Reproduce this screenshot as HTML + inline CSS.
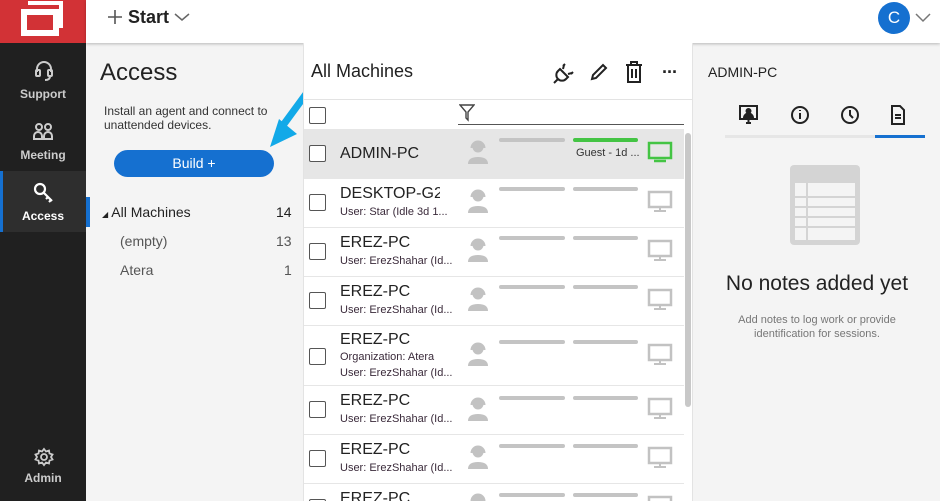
<!DOCTYPE html>
<html style="overflow:hidden;height:501px"><head><meta charset="utf-8"><style>
*{margin:0;padding:0;box-sizing:border-box}
body{width:940px;height:501px;overflow:hidden;font-family:"Liberation Sans",Arial,sans-serif;background:#f4f4f4;position:relative;color:#222}
.a{position:absolute}
.side{left:0;top:0;width:86px;height:501px;background:#202020}
.logo{left:0;top:0;width:86px;height:43px;background:#d23236}
.nav{width:86px;text-align:center;color:#ccc;font-size:12px;font-weight:bold}
.hdr{left:86px;top:0;width:854px;height:43px;background:#fff;box-shadow:0 1px 3px rgba(0,0,0,.25)}
.mid{left:303px;top:43px;width:390px;height:458px;background:#fff;border-left:1px solid #e3e3e3;border-right:1px solid #e3e3e3}
.row{left:304px;width:380px;border-bottom:1px solid #e6e6e6;overflow:hidden}
.cb{position:absolute;left:5px;width:17px;height:17px;border:1.5px solid #555;border-radius:2px;background:#fff}
.nm{position:absolute;left:36px;font-size:16px;color:#222;width:100px;overflow:hidden;white-space:nowrap}
.sb{position:absolute;left:36px;font-size:11px;color:#3a2a3a;white-space:nowrap}
</style></head><body>
<div class="a side"></div>
<div class="a logo"><svg width="86" height="43"><rect x="24" y="12" width="32" height="21" fill="none" stroke="#fff" stroke-width="6"/><path d="M28 3H61V28" fill="none" stroke="#fff" stroke-width="4"/></svg></div>
<svg class="a" style="left:33px;top:60px" width="22" height="22" fill="none" stroke="#ccc" stroke-width="2"><path d="M4 12V9a7 7 0 0 1 14 0v3"/><rect x="3" y="10" width="4" height="6" rx="1"/><rect x="15" y="10" width="4" height="6" rx="1"/><path d="M17 16q0 4-5 4"/></svg>
<div class="a nav" style="top:87px">Support</div>
<svg class="a" style="left:32px;top:122px" width="24" height="20" fill="none" stroke="#ccc" stroke-width="2"><circle cx="7" cy="5" r="3"/><circle cx="16" cy="5" r="3"/><path d="M2 17v-3a4 4 0 0 1 8 0v3zM12 17v-3a4 4 0 0 1 8 0v3z"/></svg>
<div class="a nav" style="top:148px">Meeting</div>
<div class="a" style="left:0;top:171px;width:86px;height:61px;background:#2e2e2e;border-left:3px solid #1570d0"></div>
<svg class="a" style="left:33px;top:182px" width="22" height="22" fill="none" stroke="#fff" stroke-width="2.2"><circle cx="7" cy="7" r="5"/><path d="M11 11l8 8M15 15l-2 2M18 18l-2 2"/></svg>
<div class="a nav" style="top:209px;color:#fff">Access</div>
<svg class="a" style="left:34px;top:447px" width="20" height="20" fill="none" stroke="#ccc" stroke-width="1.8"><circle cx="10" cy="10" r="3"/><path d="M10 2l2 2.5 3-1 .5 3 3 1-1.5 2.5 1.5 2.5-3 1-.5 3-3-1-2 2.5-2-2.5-3 1-.5-3-3-1L3 10 1.5 7.5l3-1 .5-3 3 1z"/></svg>
<div class="a nav" style="top:471px">Admin</div>

<div class="a hdr"></div>
<svg class="a" style="left:107px;top:9px" width="16" height="16" stroke="#555" stroke-width="1.6"><path d="M8 1v14M1 8h14"/></svg>
<div class="a" style="left:128px;top:7px;font-size:18px;font-weight:bold;color:#222">Start</div>
<svg class="a" style="left:174px;top:12px" width="16" height="10" fill="none" stroke="#666" stroke-width="1.5"><path d="M1 2l7 6 7-6"/></svg>
<div class="a" style="left:878px;top:2px;width:32px;height:32px;border-radius:50%;background:#1570d0;color:#fff;font-size:17px;text-align:center;line-height:32px">C</div>
<svg class="a" style="left:914px;top:11px" width="18" height="12" fill="none" stroke="#777" stroke-width="1.5"><path d="M2 3l7 7 7-7"/></svg>

<div class="a" style="left:100px;top:59px;font-size:24px;color:#222">Access</div>
<div class="a" style="left:104px;top:104px;font-size:12px;color:#333;line-height:14px">Install an agent and connect to<br>unattended devices.</div>
<div class="a" style="left:114px;top:150px;width:160px;height:27px;border-radius:14px;background:#1570d0;color:#fff;font-size:14px;text-align:center;line-height:27px">Build +</div>
<svg class="a" style="left:262px;top:90px" width="50" height="60"><path d="M44 4L22 34" stroke="#12a9e8" stroke-width="7"/><path d="M8 57L35 44 17 29z" fill="#12a9e8"/></svg>
<div class="a" style="left:86px;top:197px;width:4px;height:30px;background:#1570d0"></div>
<div class="a" style="left:102px;top:204px;font-size:14px;color:#222"><span style="font-size:8px">&#9698;</span> All Machines</div>
<div class="a" style="left:276px;top:204px;font-size:14px">14</div>
<div class="a" style="left:120px;top:233px;font-size:14px;color:#555">(empty)</div>
<div class="a" style="left:276px;top:233px;font-size:14px;color:#555">13</div>
<div class="a" style="left:120px;top:262px;font-size:14px;color:#555">Atera</div>
<div class="a" style="left:284px;top:262px;font-size:14px;color:#555">1</div>

<div class="a mid"></div>
<div class="a" style="left:311px;top:61px;font-size:18px;color:#222">All Machines</div>
<svg class="a" style="left:552px;top:61px" width="24" height="24" fill="none" stroke="#222" stroke-width="2"><path d="M8 8l8 8-2 2a5 5 0 0 1-8-8zM11 5l2-2M19 13l2-2M6 18l-4 4M12 4l-1 4M20 12l-4 1"/></svg>
<svg class="a" style="left:589px;top:62px" width="20" height="20" fill="none" stroke="#222" stroke-width="2"><path d="M3 17l1-4L14 3l3 3L7 16z"/></svg>
<svg class="a" style="left:625px;top:61px" width="18" height="22" fill="none" stroke="#222" stroke-width="2"><path d="M1 4h16M6 4V1h6v3M3 4v17h12V4M7 8v9M11 8v9"/></svg>
<div class="a" style="left:662px;top:62px;font-size:18px;font-weight:bold;letter-spacing:-1px">&middot;&middot;&middot;</div>
<div class="a" style="left:304px;top:99px;width:388px;border-top:1px solid #e3e3e3"></div>
<div class="a cb" style="left:309px;top:107px"></div>
<svg class="a" style="left:459px;top:104px" width="16" height="18" fill="none" stroke="#444" stroke-width="1.4"><path d="M1 1h14L9 8v8L7 14V8z"/></svg>
<div class="a" style="left:458px;top:124px;width:226px;border-top:1px solid #555"></div>
<div class="a" style="left:685px;top:133px;width:6px;height:274px;border-radius:3px;background:#c8c8c8"></div>

<div class="a row" style="top:129px;height:50px;background:#e6e6e6"><div class="cb" style="top:16px"></div><div class="nm" style="top:16px">ADMIN-PC</div></div>
<div class="a row" style="top:179px;height:49px"><div class="cb" style="top:15px"></div><div class="nm" style="top:6px">DESKTOP-G26S</div><div class="sb" style="top:27px">User: Star (Idle 3d 1...</div></div>
<div class="a row" style="top:228px;height:49px"><div class="cb" style="top:15px"></div><div class="nm" style="top:6px">EREZ-PC</div><div class="sb" style="top:27px">User: ErezShahar (Id...</div></div>
<div class="a row" style="top:277px;height:49px"><div class="cb" style="top:15px"></div><div class="nm" style="top:6px">EREZ-PC</div><div class="sb" style="top:27px">User: ErezShahar (Id...</div></div>
<div class="a row" style="top:326px;height:60px"><div class="cb" style="top:22px"></div><div class="nm" style="top:5px">EREZ-PC</div><div class="sb" style="top:25px">Organization: Atera</div><div class="sb" style="top:41px">User: ErezShahar (Id...</div></div>
<div class="a row" style="top:386px;height:49px"><div class="cb" style="top:15px"></div><div class="nm" style="top:6px">EREZ-PC</div><div class="sb" style="top:27px">User: ErezShahar (Id...</div></div>
<div class="a row" style="top:435px;height:49px"><div class="cb" style="top:15px"></div><div class="nm" style="top:6px">EREZ-PC</div><div class="sb" style="top:27px">User: ErezShahar (Id...</div></div>
<div class="a row" style="top:484px;height:17px;border-bottom:none"><div class="cb" style="top:15px"></div><div class="nm" style="top:6px">EREZ-PC</div></div>

<svg class="a" style="left:466px;top:0" width="220" height="501">
<defs><g id="p" fill="#c2c2c2"><circle cx="12" cy="9" r="5.5"/><path d="M5.5 10a6.5 6.5 0 0 1 13 0" fill="none" stroke="#c2c2c2" stroke-width="2"/><path d="M2 26q0-7 10-7t10 7z"/></g>
<g id="m" fill="none" stroke="#c2c2c2"><rect x="183" y="3" width="22" height="15" stroke-width="2.5"/><path d="M194 19v2M188 22h12" stroke-width="2"/></g></defs>
<use href="#p" y="138"/><use href="#p" y="187"/><use href="#p" y="236"/><use href="#p" y="285"/><use href="#p" y="340"/><use href="#p" y="395"/><use href="#p" y="443"/><use href="#p" y="491"/>
<rect x="33" y="138" width="66" height="4" rx="2" fill="#c4c4c4"/><rect x="107" y="138" width="65" height="4" rx="2" fill="#44c444"/>
<g fill="#c4c4c4"><rect x="33" y="187" width="66" height="4" rx="2"/><rect x="107" y="187" width="65" height="4" rx="2"/>
<rect x="33" y="236" width="66" height="4" rx="2"/><rect x="107" y="236" width="65" height="4" rx="2"/>
<rect x="33" y="285" width="66" height="4" rx="2"/><rect x="107" y="285" width="65" height="4" rx="2"/>
<rect x="33" y="340" width="66" height="4" rx="2"/><rect x="107" y="340" width="65" height="4" rx="2"/>
<rect x="33" y="396" width="66" height="4" rx="2"/><rect x="107" y="396" width="65" height="4" rx="2"/>
<rect x="33" y="444" width="66" height="4" rx="2"/><rect x="107" y="444" width="65" height="4" rx="2"/>
<rect x="33" y="493" width="66" height="4" rx="2"/><rect x="107" y="493" width="65" height="4" rx="2"/></g>
<g transform="translate(0,140)" fill="none" stroke="#44c444"><rect x="183" y="3" width="22" height="15" stroke-width="2.5"/><path d="M188 21h12" stroke-width="2.5"/></g>
<use href="#m" y="189"/><use href="#m" y="238"/><use href="#m" y="287"/><use href="#m" y="342"/><use href="#m" y="396"/><use href="#m" y="445"/><use href="#m" y="494"/>
</svg>
<div class="a" style="left:576px;top:147px;font-size:11px;color:#333">Guest - 1d ...</div>

<div class="a" style="left:708px;top:64px;font-size:14px;color:#222">ADMIN-PC</div>
<svg class="a" style="left:738px;top:104px" width="180" height="22" fill="none" stroke="#222" stroke-width="2">
<rect x="2" y="2" width="17" height="13"/><circle cx="10.5" cy="7" r="2" fill="#222"/><path d="M6 14a4 4 0 0 1 9 0z" fill="#222"/><path d="M8 19h5M10.5 15v4"/>
<circle cx="62" cy="11" r="8"/><path d="M62 9v6M62 6v1"/>
<circle cx="112" cy="11" r="8"/><path d="M112 6v5l3 3"/>
<path d="M154 2h8l4 4v14h-12zM157 11h6M157 14h6"/></svg>
<div class="a" style="left:725px;top:135px;width:150px;height:3px;background:#e6e6e6"></div>
<div class="a" style="left:875px;top:135px;width:50px;height:3px;background:#1570d0"></div>
<svg class="a" style="left:790px;top:165px" width="70" height="80"><rect x="0" y="0" width="70" height="80" rx="4" fill="#d4d4d4"/><rect x="5" y="18" width="60" height="57" fill="#f4f4f4"/><path d="M17 18v57M5 32h60M5 42h60M5 52h60M5 62h60" stroke="#d4d4d4" stroke-width="2"/></svg>
<div class="a" style="left:694px;top:272px;width:246px;text-align:center;font-size:21px;color:#222">No notes added yet</div>
<div class="a" style="left:694px;top:313px;width:246px;text-align:center;font-size:11px;color:#777;line-height:14px">Add notes to log work or provide<br>identification for sessions.</div>
</body></html>
